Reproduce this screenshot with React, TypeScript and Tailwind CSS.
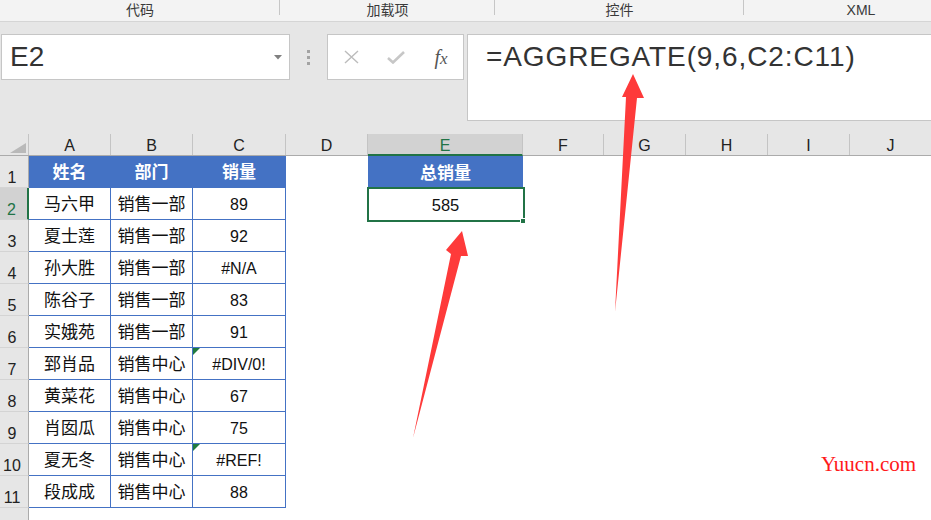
import React from "react";

const cols = ["A", "B", "C", "D", "E", "F", "G", "H", "I", "J"];

// sheet data (A2:C11)
const rows = [
  ["马六甲", "销售一部", "89"],
  ["夏士莲", "销售一部", "92"],
  ["孙大胜", "销售一部", "#N/A"],
  ["陈谷子", "销售一部", "83"],
  ["实娥苑", "销售一部", "91"],
  ["郅肖品", "销售中心", "#DIV/0!"],
  ["黄菜花", "销售中心", "67"],
  ["肖囡瓜", "销售中心", "75"],
  ["夏无冬", "销售中心", "#REF!"],
  ["段成成", "销售中心", "88"],
];

const errorFlag = ["#DIV/0!", "#REF!"];

const font = { fontFamily: '"Liberation Sans", "Noto Sans CJK SC", sans-serif' };

function Ribbon() {
  const groups = [
    { label: "代码", w: "w-[280px]" },
    { label: "加载项", w: "w-[215px]" },
    { label: "控件", w: "w-[249px]" },
    { label: "XML", w: "w-[234px]" },
  ];
  return (
    <div className="flex h-[22px] bg-[#f3f3f3] border-b border-[#d5d5d5] overflow-visible">
      {groups.map((g, i) => (
        <div key={g.label} className={`${g.w} shrink-0 relative flex justify-center pt-[1px]`}>
          <span className="text-[14px] leading-[18px] text-[#3a3a3a]">{g.label}</span>
          {i < 3 && <div className="absolute right-0 top-0 h-[15px] w-px bg-[#c6c6c6]" />}
        </div>
      ))}
    </div>
  );
}

function FormulaBar() {
  return (
    <div className="flex items-start h-[112px] bg-[#e6e6e6] pl-[1px] pt-[12px]">
      <div className="w-[289px] h-[46px] bg-white border border-[#c6c6c6] flex items-start justify-between pl-[8px] pr-[7px]">
        <span className="text-[28px] leading-none pt-[8px] text-[#333]">E2</span>
        <svg width="8" height="5" className="mt-[20px]" viewBox="0 0 8 5">
          <path d="M0 0 L8 0 L4 4.5 Z" fill="#808080" />
        </svg>
      </div>
      <div className="w-[37px] h-[46px] flex flex-col items-center justify-center gap-[3px]">
        <div className="w-[3px] h-[3px] bg-[#a3a3a3]" />
        <div className="w-[3px] h-[3px] bg-[#a3a3a3]" />
        <div className="w-[3px] h-[3px] bg-[#a3a3a3]" />
      </div>
      <div className="w-[137px] h-[46px] bg-white border border-[#c6c6c6] flex items-center">
        <div className="w-[44px] flex justify-center ml-[1px]">
          <svg width="15" height="14" viewBox="0 0 15 14">
            <path d="M1 1 L14 13 M14 1 L1 13" stroke="#bcbcbc" strokeWidth="1.4" fill="none" />
          </svg>
        </div>
        <div className="w-[46px] flex justify-center">
          <svg width="18" height="13" viewBox="0 0 18 13">
            <path d="M1 7 L6 11.5 L17 1" stroke="#c7c7c7" strokeWidth="2.6" fill="none" />
          </svg>
        </div>
        <div className="w-[44px] flex justify-center">
          <span className="italic text-[20px] leading-none text-[#555]" style={{ fontFamily: '"Liberation Serif", serif' }}>
            f<span className="text-[17px]">x</span>
          </span>
        </div>
      </div>
      <div className="ml-[3px] flex-1 h-[87px] bg-white border border-r-0 border-[#c6c6c6] pl-[18px] pt-[8px]">
        <span className="text-[28px] leading-none tracking-[0.9px] text-[#333]">=AGGREGATE(9,6,C2:C11)</span>
      </div>
    </div>
  );
}

const gridCols = "grid grid-cols-[29px_82px_82px_93px_82px_155px_81px_82px_82px_82px_82px]";

function ColumnHeader() {
  return (
    <div className={`${gridCols} h-[22px] bg-[#e6e6e6] border-b border-[#ababab]`}>
      <div className="relative border-r border-[#c4c4c4]">
        <svg width="16" height="10" viewBox="0 0 16 10" className="absolute left-[10px] top-[9px]">
          <path d="M16 0 L16 10 L0 10 Z" fill="#b9b9b9" />
        </svg>
      </div>
      {cols.map((c) =>
        c === "E" ? (
          <div key={c} className="bg-[#d2d2d2] border-r border-[#c4c4c4] border-b-2 border-b-[#217346] -mb-px flex justify-center pt-[4px]">
            <span className="text-[16px] leading-none text-[#217346]">{c}</span>
          </div>
        ) : (
          <div key={c} className="border-r border-[#c4c4c4] flex justify-center pt-[4px]">
            <span className="text-[16px] leading-none text-[#222]">{c}</span>
          </div>
        )
      )}
    </div>
  );
}

function RowHeader({ n }: { n: number }) {
  const sel = n === 2;
  return (
    <div
      className={`h-[32px] flex items-end justify-center pr-[4px] border-b border-[#d4d4d4] ${
        sel ? "bg-[#d2d2d2] border-r-2 border-r-[#217346]" : "bg-[#e6e6e6] border-r border-r-[#ababab]"
      }`}
    >
      {n <= 11 && (
        <span className={`text-[16px] leading-none pb-[1px] ${sel ? "text-[#217346]" : "text-[#222]"}`}>{n}</span>
      )}
    </div>
  );
}

function TableCell({ text, head, num }: { text: string; head?: boolean; num?: boolean }) {
  return (
    <div
      className={`relative h-[32px] flex items-center justify-center border-r border-b border-[#4472c4] ${
        head ? "bg-[#4472c4] text-white font-bold text-[17px] pt-[3px]" : "bg-white text-[#111] pt-[2px]"
      } ${num ? "text-[16px]" : head ? "" : "text-[17px]"}`}
    >
      {text}
      {errorFlag.includes(text) && (
        <svg width="7" height="7" viewBox="0 0 7 7" className="absolute left-0 top-0">
          <path d="M0 0 L7 0 L0 7 Z" fill="#1f7a3f" />
        </svg>
      )}
    </div>
  );
}

function SheetRow({ n }: { n: number }) {
  const data = n === 1 ? ["姓名", "部门", "销量"] : n <= 11 ? rows[n - 2] : null;
  return (
    <>
      <RowHeader n={n} />
      {data ? (
        data.map((t, i) => <TableCell key={i} text={t} head={n === 1} num={i === 2 && n > 1} />)
      ) : (
        <>
          <div />
          <div />
          <div />
        </>
      )}
      <div />
      {n === 1 ? (
        <div className="h-[32px] bg-[#4472c4] text-white font-bold text-[17px] pt-[3px] flex items-center justify-center">总销量</div>
      ) : n === 2 ? (
        <div className="relative h-[32px] flex items-center justify-center pt-[3px] text-[16.5px] text-[#111]">
          585
          <div className="absolute -left-[1.5px] -top-px -right-[1.5px] -bottom-[1.5px] border-2 border-[#217346]" />
          <div className="absolute -right-[3px] -bottom-[4px] w-[6px] h-[6px] bg-[#217346] border border-white" />
        </div>
      ) : (
        <div />
      )}
      <div />
      <div />
      <div />
      <div />
      <div />
    </>
  );
}

export default function App() {
  return (
    <div className="relative w-[931px] h-[520px] overflow-hidden bg-white" style={font}>
      <Ribbon />
      <FormulaBar />
      <ColumnHeader />
      <div className={gridCols}>
        {Array.from({ length: 12 }, (_, i) => (
          <SheetRow key={i} n={i + 1} />
        ))}
      </div>

      {/* red annotation arrows */}
      <svg className="absolute left-0 top-0 pointer-events-none" width="931" height="520" viewBox="0 0 931 520">
        <polygon points="413,438 451,254 446,250 462,231 468,256 461,256" fill="#fe3a3a" />
        <polygon points="615,312 626,97 622,97 633,74 644,98 637,98" fill="#fe3a3a" />
      </svg>

      <span
        className="absolute left-[821px] top-[454px] text-[21px] leading-none text-[#ff1a1a]"
        style={{ fontFamily: '"Liberation Serif", serif' }}
      >
        Yuucn.com
      </span>
    </div>
  );
}
